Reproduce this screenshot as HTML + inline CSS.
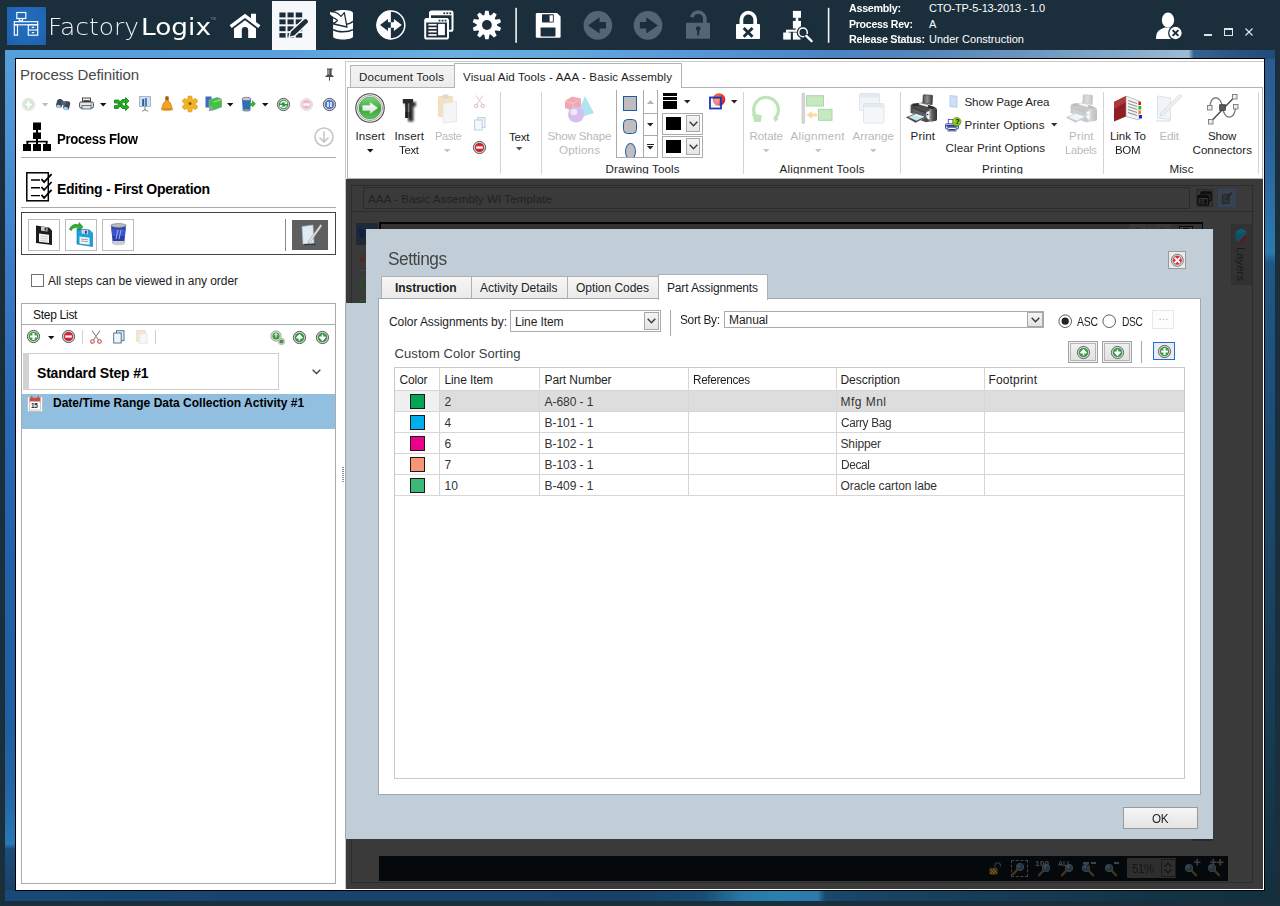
<!DOCTYPE html>
<html lang="en"><head><meta charset="utf-8"><title>FactoryLogix - Process Definition</title>
<style>
html,body{margin:0;padding:0}
body{width:1280px;height:906px;overflow:hidden;background:#1b2e3c;position:relative;font-family:"Liberation Sans",sans-serif;}
.a{position:absolute;box-sizing:border-box}
.t{position:absolute;white-space:nowrap;font-family:"Liberation Sans",sans-serif}
svg{overflow:visible}
</style></head><body>
<div class="a" style="left:5px;top:50px;width:1270px;height:851px;background:#1f4f85;"></div>
<div class="a" style="left:5px;top:50px;width:1270px;height:9px;background:linear-gradient(90deg,#569ddc 0%,#5aa0dd 22%,#6cb0e0 35%,#62a6dc 45%,#5a9ad8 52%,#5390d0 58%,#4b84c3 65%,#5486bb 72%,#6a94bf 80%,#86aac8 88%,#9cbad2 93%,#9cbad2 93.200%,#36628f 93.600%,#2d5788 96%,#224a78 100%);"></div>
<div class="a" style="left:5px;top:50px;width:11px;height:851px;background:linear-gradient(180deg,#579edc 0%,#4d93d6 10%,#3a7dc6 25%,#2b6ab4 42%,#2262aa 60%,#1f5fa2 80%,#2468a8 88%,#2a78b4 93.300%,#1c4c7c 93.900%,#193f62 100%);"></div>
<div class="a" style="left:5px;top:50px;width:8px;height:9px;background:#579edc;"></div>
<div class="a" style="left:1264px;top:59px;width:11px;height:842px;background:linear-gradient(180deg,#2a5a90 0%,#2a629a 10%,#2b72a8 19%,#2a7aae 23%,#1f5784 24.200%,#1d4e7a 40%,#19425f 65%,#143648 88%,#12303e 100%);"></div>
<div class="a" style="left:5px;top:890px;width:1270px;height:11px;background:linear-gradient(90deg,#1a4878 0%,#17446e 20%,#164268 50%,#194c74 55%,#2678a8 58%,#2b80b0 61%,#2a7aac 64%,#18486c 64.600%,#163e5a 75%,#133446 90%,#12303e 100%);"></div>
<div class="a" style="left:15px;top:58px;width:1250px;height:833px;background:#fff;border:1px solid #000;"></div>
<div class="a" style="left:7px;top:7px;width:39px;height:38px;background:radial-gradient(ellipse at 50% 45%,#226bbb 0%,#2168b8 60%,#1f5faa 100%);"></div>
<svg class="a" style="left:7px;top:7px;" width="39" height="38" viewBox="0 0 39 38"><g fill="none" stroke="#fff" stroke-width="1.150">
<rect x="9.800" y="5.500" width="9" height="6"></rect><path d="M12.300 11.500v2.300h3.200v-2.300"></path>
<rect x="7.300" y="14.700" width="23.400" height="3.100"></rect><rect x="7.300" y="17.800" width="3.200" height="10.400"></rect>
<rect x="21.300" y="17.800" width="9.400" height="10.400"></rect><path d="M21.300 23h9.400"></path>
<path d="M24.800 20.400h2.400M24.800 25.700h2.400" stroke-width="1.300"></path></g></svg>
<span class="t" style="left: 48px; top: 11.5px; font-size: 22.5px; line-height: 30px; color: rgb(238, 242, 245); font-family: &quot;DejaVu Sans&quot;, sans-serif; font-weight: 200; transform: scaleX(1.107); transform-origin: 0px 50%;">Factory</span>
<span class="t" style="left: 141px; top: 11.5px; font-size: 22.5px; line-height: 30px; color: rgb(255, 255, 255); font-family: &quot;DejaVu Sans&quot;, sans-serif; transform: scaleX(1.171); transform-origin: 0px 50%;">Logix</span>
<span class="t" style="left:210.5px;top:16.3px;font-size:3.6px;font-weight:400;color:#8295a3;line-height:6px;">TM</span>
<div class="a" style="left:272px;top:1px;width:44px;height:49px;background:#f7f8fb;"></div>
<svg class="a" style="left:0;top:0" width="1280" height="50" viewBox="0 0 1280 50">
<!-- home -->
<path d="M229.600 25.300 L245 13.700 L251 18.200 V13.800 H256 V22 L260.400 25.300 L258.300 28.100 L245 18.100 L231.700 28.100 Z" fill="#fff"></path>
<path d="M234 28.600 L245 20.300 L256 28.600 V38 H248.200 V30.200 a3.200 3.200 0 0 0 -6.400 0 V38 H234 Z" fill="#fff"></path>
<!-- grid + pencil -->
<g fill="#1b2e3c">
<rect x="279.400" y="12.500" width="6.200" height="4.900"></rect><rect x="287.500" y="12.500" width="6.200" height="4.900"></rect><rect x="295.700" y="12.500" width="6.500" height="4.900"></rect>
<rect x="279.400" y="19.400" width="6.200" height="4.900"></rect><rect x="287.500" y="19.400" width="6.200" height="4.900"></rect><rect x="295.700" y="19.400" width="6.500" height="4.900"></rect>
<rect x="279.400" y="26.300" width="6.200" height="4.900"></rect><rect x="287.500" y="26.300" width="6.200" height="4.900"></rect><rect x="295.700" y="26.300" width="6.500" height="4.900"></rect>
<rect x="279.400" y="33.100" width="6.200" height="4.500"></rect><rect x="287.500" y="33.100" width="6.200" height="4.500"></rect><rect x="295.700" y="33.100" width="6.500" height="4.500"></rect>
</g>
<path d="M289 37.400 L290.300 31.600 L303.800 18.900 a2.300 2.300 0 0 1 3.300 0 L308 19.900 a2.300 2.300 0 0 1 0 3.300 L294.800 36 Z" fill="#1b2e3c" stroke="#f7f8fb" stroke-width="1.400" stroke-linejoin="round"></path>
<!-- database + arrow -->
<path d="M333.100 13.200 C333.100 9,353 9,353 13.200 V36.600 C353 40.600,333.100 40.600,333.100 36.600 Z" fill="#fff"></path>
<path d="M333.100 22.600 C337 25.600,349 25.400,353 21.200 M333.100 29.600 C338 32.600,348 32.600,353 29.600" fill="none" stroke="#1b2e3c" stroke-width="1.500"></path>
<path d="M329.300 12.700 Q329 11.300 330.800 11.500 L335 12.200 Q338.500 13.200 341 16.400 L344.300 12.600 L347 27 L333.600 24 L337.400 20.500 Q335.500 18.300 333 17.600 L330.300 15.600 Q329.300 14.500 329.300 12.700 Z" fill="#fff" stroke="#1b2e3c" stroke-width="1.300" stroke-linejoin="round"></path>
<!-- compass -->
<circle cx="390.900" cy="25" r="13.900" fill="none" stroke="#fff" stroke-width="1.500"></circle>
<path d="M390.900 10.600 A14.400 14.400 0 0 0 390.900 39.400 Z" fill="#fff"></path>
<path d="M380 25 L388 19 V22.300 H391 V27.700 H388 V31 Z" fill="#1b2e3c"></path>
<path d="M401.800 25 L393.900 19 V22.300 H390.800 V27.700 H393.900 V31 Z" fill="#fff"></path>
<!-- windows -->
<rect x="430" y="11.400" width="22.500" height="19.400" rx="1.600" fill="#1b2e3c" stroke="#fff" stroke-width="2"></rect>
<rect x="430" y="11" width="22.500" height="4.300" fill="#fff"></rect>
<rect x="425.200" y="18.900" width="22.800" height="19.700" rx="1.600" fill="#1b2e3c" stroke="#fff" stroke-width="2"></rect>
<rect x="425.200" y="18.500" width="22.800" height="4" fill="#fff"></rect>
<g fill="#fff"><rect x="428.400" y="23.900" width="8.200" height="1.700"></rect><rect x="428.400" y="27.300" width="8.200" height="1.700"></rect><rect x="428.400" y="30.700" width="8.200" height="1.700"></rect><rect x="428.400" y="34.100" width="8.200" height="1.700"></rect><rect x="438.100" y="23.900" width="6.800" height="11.300"></rect></g>
<g fill="#1b2e3c"><rect x="443.400" y="12.400" width="1.800" height="1.700"></rect><rect x="446.400" y="12.400" width="1.800" height="1.700"></rect><rect x="449.400" y="12.400" width="1.800" height="1.700"></rect><rect x="438.600" y="19.700" width="1.800" height="1.700"></rect><rect x="441.600" y="19.700" width="1.800" height="1.700"></rect><rect x="444.600" y="19.700" width="1.800" height="1.700"></rect></g>
<!-- gear -->
<g transform="translate(486.900,25)" fill="#fff"><path d="M-2.700 -9 L-1.700 -14.300 L1.700 -14.300 L2.700 -9 Z" transform="rotate(0)"></path><path d="M-2.700 -9 L-1.700 -14.300 L1.700 -14.300 L2.700 -9 Z" transform="rotate(36)"></path><path d="M-2.700 -9 L-1.700 -14.300 L1.700 -14.300 L2.700 -9 Z" transform="rotate(72)"></path><path d="M-2.700 -9 L-1.700 -14.300 L1.700 -14.300 L2.700 -9 Z" transform="rotate(108)"></path><path d="M-2.700 -9 L-1.700 -14.300 L1.700 -14.300 L2.700 -9 Z" transform="rotate(144)"></path><path d="M-2.700 -9 L-1.700 -14.300 L1.700 -14.300 L2.700 -9 Z" transform="rotate(180)"></path><path d="M-2.700 -9 L-1.700 -14.300 L1.700 -14.300 L2.700 -9 Z" transform="rotate(216)"></path><path d="M-2.700 -9 L-1.700 -14.300 L1.700 -14.300 L2.700 -9 Z" transform="rotate(252)"></path><path d="M-2.700 -9 L-1.700 -14.300 L1.700 -14.300 L2.700 -9 Z" transform="rotate(288)"></path><path d="M-2.700 -9 L-1.700 -14.300 L1.700 -14.300 L2.700 -9 Z" transform="rotate(324)"></path><circle r="10.200"></circle></g><circle cx="486.900" cy="25" r="4.900" fill="#1b2e3c"></circle>
<!-- separators -->
<rect x="515.300" y="7.800" width="1.600" height="35" fill="#f2f4f6"></rect><rect x="827.800" y="7.800" width="1.600" height="35" fill="#f2f4f6"></rect>
<!-- save -->
<path d="M537 13 H557 L560.600 16.600 V36.600 Q560.600 37.800 559.400 37.800 H537 Q535.800 37.800 535.800 36.600 V14.200 Q535.800 13 537 13 Z" fill="#fff"></path>
<rect x="542" y="14.200" width="11.800" height="8.400" rx=".8" fill="#1b2e3c"></rect><rect x="549.600" y="15.300" width="3.300" height="6.400" fill="#fff"></rect>
<rect x="540.600" y="27.400" width="14.900" height="9.100" rx=".8" fill="#1b2e3c"></rect>
<!-- back / forward -->
<circle cx="597.900" cy="25.400" r="14.300" fill="#546673"></circle><path d="M588 25.400 L599.600 17.300 V22.100 H606 V28.600 H599.600 V33.500 Z" fill="#1b2e3c"></path>
<circle cx="648" cy="25.400" r="14.300" fill="#546673"></circle><path d="M657.900 25.400 L646.300 17.300 V22.100 H639.900 V28.600 H646.300 V33.500 Z" fill="#1b2e3c"></path>
<!-- unlock (dim) -->
<path d="M691.800 17.200 a6.600 6.600 0 0 1 13 1.500 V23" fill="none" stroke="#546673" stroke-width="3.700"></path>
<rect x="686" y="22.700" width="24" height="16" rx=".8" fill="#546673"></rect><circle cx="698.200" cy="28.500" r="2.300" fill="#1b2e3c"></circle><rect x="697.200" y="29" width="2" height="6.300" fill="#1b2e3c"></rect>
<!-- lock x -->
<path d="M741.400 24.500 V19.600 a6.900 6.900 0 0 1 13.800 0 V24.500" fill="none" stroke="#fff" stroke-width="3.700"></path>
<rect x="736" y="24" width="24" height="15" rx=".8" fill="#fff"></rect><path d="M743.700 28 l8.800 8.800 M752.500 28 l-8.800 8.800" stroke="#1b2e3c" stroke-width="2.900"></path>
<!-- flow search -->
<g fill="#fff"><rect x="792.900" y="10.900" width="8.100" height="6.900"></rect><rect x="795.700" y="17.500" width="2.600" height="3.700"></rect><rect x="792.900" y="20.900" width="8.100" height="7.500"></rect><rect x="795.700" y="28" width="2.600" height="3.700"></rect>
<rect x="786.200" y="29.700" width="11" height="2.100"></rect><rect x="786.200" y="30" width="2.100" height="3"></rect><rect x="783.200" y="32.500" width="7.600" height="7.100"></rect><rect x="792.900" y="32.500" width="7.600" height="7.100"></rect></g>
<circle cx="803" cy="32.400" r="5" fill="#1b2e3c" stroke="#1b2e3c" stroke-width="2.600"></circle><circle cx="803" cy="32.400" r="4.300" fill="#1b2e3c" stroke="#fff" stroke-width="1.500"></circle>
<path d="M806.300 35.900 L811.800 41.300" stroke="#1b2e3c" stroke-width="4.200" stroke-linecap="round"></path><path d="M806.300 35.900 L811.600 41.100" stroke="#fff" stroke-width="2.300" stroke-linecap="round"></path>
</svg>
<span class="t" style="left: 849px; top: -2px; font-size: 11px; font-weight: 700; color: rgb(255, 255, 255); line-height: 20px; letter-spacing: -0.31px; transform: scaleX(0.978); transform-origin: 0px 50%;">Assembly:</span>
<span class="t" style="left: 929px; top: -2px; font-size: 11px; font-weight: 400; color: rgb(255, 255, 255); line-height: 20px; letter-spacing: -0.17px;">CTO-TP-5-13-2013 - 1.0</span>
<span class="t" style="left: 849px; top: 14px; font-size: 11px; font-weight: 700; color: rgb(255, 255, 255); line-height: 20px; letter-spacing: -0.31px; transform: scaleX(0.965); transform-origin: 0px 50%;">Process Rev:</span>
<span class="t" style="left:929px;top:14.0px;font-size:11px;font-weight:400;color:#fff;line-height:20px;">A</span>
<span class="t" style="left: 849px; top: 29px; font-size: 11px; font-weight: 700; color: rgb(255, 255, 255); line-height: 20px; letter-spacing: -0.31px; transform: scaleX(0.98); transform-origin: 0px 50%;">Release Status:</span>
<span class="t" style="left: 929px; top: 29px; font-size: 11px; font-weight: 400; color: rgb(255, 255, 255); line-height: 20px; letter-spacing: 0.01px;">Under Construction</span>
<svg class="a" style="left:1156px;top:12px;" width="27" height="28" viewBox="0 0 27 28"><ellipse cx="12" cy="8" rx="6.2" ry="7.5" fill="#fff"></ellipse><path d="M0 27 C0 18,5 17,9 15.5 h6 C19 17,24 18,24 27Z" fill="#fff"></path>
<circle cx="19.5" cy="21" r="6.8" fill="#fff" stroke="#1b2e3c" stroke-width="1.3"></circle><path d="M16.6 18.1 l5.8 5.8 M22.4 18.1 l-5.8 5.8" stroke="#1b2e3c" stroke-width="2"></path></svg>
<div class="a" style="left:1204px;top:34px;width:8px;height:2px;background:#dfe5ea;"></div>
<div class="a" style="left:1224px;top:28px;width:9px;height:8px;border:1px solid #dfe5ea;border-top-width:2px;"></div>
<svg class="a" style="left:1245px;top:28px;" width="8" height="8" viewBox="0 0 8 8"><path d="M0.5 0.5 l7 7 M7.5 0.5 l-7 7" stroke="#dfe5ea" stroke-width="1.2"></path></svg>
<span class="t" style="left: 20px; top: 64.5px; font-size: 15px; font-weight: 400; color: rgb(72, 72, 72); line-height: 20px; letter-spacing: -0.11px;">Process Definition</span>
<svg class="a" style="left:325px;top:68px;" width="9" height="13" viewBox="0 0 9 13"><path d="M2 0.5h5.5v1H6.6v5.2l2 1.6v.8H0.4v-.8l2-1.6V1.5H2z" fill="#4a4a4a"></path><rect x="3" y="1.5" width="1.6" height="5" fill="#999"></rect><path d="M4.5 9v3.6" stroke="#4a4a4a" stroke-width="1"></path></svg>
<svg class="a" style="left:20.5px;top:96.5px;opacity:0.55" width="15.0" height="15.0" viewBox="-7.5 -7.5 15.0 15.0"><circle r="6.1" fill="#e4e4e4" stroke="#bbb" stroke-width="0.9"></circle><circle r="4.6" fill="#9dd49d" stroke="#bbb" stroke-opacity=".55" stroke-width=".5"></circle><path d="M-3.500 0h7M0-3.500v7" stroke="#fff" stroke-width="2.200"></path></svg>
<svg class="a" style="left:41.8px;top:102.7px;" width="6.4" height="3.5" viewBox="0 0 6.4 3.5"><path d="M0 0h6.400L3.200 3.500z" fill="#bbb"></path></svg>
<svg class="a" style="left:56px;top:97px;" width="15" height="13" viewBox="0 0 15 13"><g transform="rotate(16 7 7)"><rect x="0.5" y="3" width="6" height="9" rx="2.6" fill="#3c4854"></rect><rect x="8" y="3" width="6" height="9" rx="2.6" fill="#3c4854"></rect><rect x="5" y="4" width="4.5" height="4" fill="#556270"></rect>
<ellipse cx="3.5" cy="10.6" rx="2.3" ry="1.6" fill="#9fd0f0"></ellipse><ellipse cx="11" cy="10.6" rx="2.3" ry="1.6" fill="#9fd0f0"></ellipse></g></svg>
<svg class="a" style="left:79px;top:97px;" width="15" height="13" viewBox="0 0 15 13"><rect x="3.5" y="1" width="8" height="5" fill="#f4f4f4" stroke="#333" stroke-width=".9"></rect><rect x="4.300" y="3.200" width="6.400" height="2.300" fill="#3a3a3a"></rect><rect x="0.6" y="5" width="13.8" height="6" rx="1.3" fill="#e9e9ec" stroke="#333" stroke-width=".9"></rect><rect x="3" y="8.4" width="9" height="3.6" fill="#cfe9f5" stroke="#555" stroke-width=".8"></rect><rect x="11.6" y="6.5" width="1.3" height="1" fill="#36f"></rect></svg>
<svg class="a" style="left:99.8px;top:102.7px;" width="6.4" height="3.5" viewBox="0 0 6.4 3.5"><path d="M0 0h6.400L3.200 3.500z" fill="#111"></path></svg>
<svg class="a" style="left:114px;top:97px;" width="15" height="14" viewBox="0 0 15 14"><g fill="#22b022" stroke="#0d7a0d" stroke-width=".8"><path d="M0.5 3h4l5 6h2V7l3.5 3.3L11.5 13.5v-2H8.3L3.5 6h-3z"></path><path d="M0.5 11.5h3.6l5-6.2h2.4v2L15 4 11.500.6v2H8L3.3 8.5H0.5z"></path></g></svg>
<svg class="a" style="left:139px;top:96px;" width="12" height="16" viewBox="0 0 12 16"><rect x="0.5" y="0.5" width="11" height="10" fill="#cfe0f2" stroke="#9ab" stroke-width=".8"></rect><rect x="3.2" y="3" width="2" height="7" fill="#2c5c9c"></rect><rect x="6" y="2" width="2" height="8" fill="#557fb8"></rect><path d="M6 10.500v4M3 15.5l3-2 3 2" stroke="#777" stroke-width=".9" fill="none"></path></svg>
<svg class="a" style="left:161px;top:96px;" width="12" height="15" viewBox="0 0 12 15"><path d="M4.7 0.8h2.6v4.5C10 6.5,10.3 10,11.3 12.5v1.3H0.7v-1.3C1.7 10,2 6.500,4.700 5.300z" fill="#f2a422" stroke="#b36b0a" stroke-width=".7"></path><rect x="4.700" y="0.600" width="2.600" height="3.500" fill="#a25b12"></rect><ellipse cx="6" cy="13.300" rx="5.200" ry="1.200" fill="#d98914"></ellipse></svg>
<svg class="a" style="left:182px;top:96px;" width="16" height="16" viewBox="0 0 16 16"><g transform="translate(8,8)" fill="#f0b323" stroke="#c98a10" stroke-width=".5"><rect x="-2.2" y="-8" width="4.4" height="5" rx="1.4" transform="rotate(0)"></rect><rect x="-2.2" y="-8" width="4.4" height="5" rx="1.4" transform="rotate(60)"></rect><rect x="-2.2" y="-8" width="4.4" height="5" rx="1.4" transform="rotate(120)"></rect><rect x="-2.2" y="-8" width="4.4" height="5" rx="1.4" transform="rotate(180)"></rect><rect x="-2.2" y="-8" width="4.4" height="5" rx="1.4" transform="rotate(240)"></rect><rect x="-2.2" y="-8" width="4.4" height="5" rx="1.4" transform="rotate(300)"></rect><circle r="5.6" stroke="none"></circle></g><circle cx="8" cy="7.500" r="1.600" fill="#7a5a10"></circle></svg>
<svg class="a" style="left:205px;top:96px;" width="17" height="16" viewBox="0 0 17 16"><rect x="0.5" y="0.5" width="6" height="11" fill="#3a6cc0"></rect><path d="M4 4l8-2.500 4.500 1.500v8l-8 3L4 12z" fill="#3fc43f" stroke="#8a9aa8" stroke-width=".8"></path><path d="M8.500 6l8-2.500" stroke="#d7f5d7" stroke-width=".7"></path><rect x="4" y="10" width="3.500" height="5" fill="#8aa"></rect></svg>
<svg class="a" style="left:226.8px;top:102.7px;" width="6.4" height="3.5" viewBox="0 0 6.4 3.5"><path d="M0 0h6.400L3.200 3.500z" fill="#111"></path></svg>
<svg class="a" style="left:241px;top:96px;" width="15" height="16" viewBox="0 0 15 16"><path d="M1 3h9l-.7 11.500H1.700z" fill="#2a6fb8"></path><ellipse cx="5.500" cy="3" rx="4.600" ry="1.700" fill="#c8ccd0" stroke="#667" stroke-width=".7"></ellipse><ellipse cx="5.500" cy="14.200" rx="3.900" ry="1.300" fill="#8a949c"></ellipse><path d="M6.500 10.500l5-4V4.700l3 3.100-3 3.200V9.200z" fill="#2eb82e" stroke="#128a12" stroke-width=".5"></path></svg>
<svg class="a" style="left:261.8px;top:102.7px;" width="6.4" height="3.5" viewBox="0 0 6.4 3.5"><path d="M0 0h6.400L3.200 3.500z" fill="#111"></path></svg>
<svg class="a" style="left:275.5px;top:96.5px;opacity:1" width="15.0" height="15.0" viewBox="-7.5 -7.5 15.0 15.0"><circle r="6.1" fill="#e4e4e4" stroke="#444" stroke-width="0.9"></circle><circle r="4.6" fill="#2a9a3a" stroke="#444" stroke-opacity=".55" stroke-width=".5"></circle><path d="M-2.900-.9A3 3 0 0 1 2.300-1.900M2.900.900A3 3 0 0 1-2.300 1.900" stroke="#fff" stroke-width="1.300" fill="none"></path><path d="M3.600-3.300v2.700h-2.700zM-3.600 3.300v-2.700h2.700z" fill="#fff"></path></svg>
<svg class="a" style="left:298.5px;top:96.5px;opacity:0.7" width="15.0" height="15.0" viewBox="-7.5 -7.5 15.0 15.0"><circle r="6.1" fill="#e4e4e4" stroke="#ccc" stroke-width="0.9"></circle><circle r="4.6" fill="#f29ab0" stroke="#ccc" stroke-opacity=".55" stroke-width=".5"></circle><path d="M-3.300 0h6.600" stroke="#fff" stroke-width="2.300"></path></svg>
<svg class="a" style="left:321.5px;top:96.5px;opacity:1" width="15.0" height="15.0" viewBox="-7.5 -7.5 15.0 15.0"><circle r="6.1" fill="#e4e4e4" stroke="#444" stroke-width="0.9"></circle><circle r="4.6" fill="#4a78e0" stroke="#444" stroke-opacity=".55" stroke-width=".5"></circle><path d="M-1.500-2.600v5.200M1.500-2.600v5.200" stroke="#fff" stroke-width="1.500"></path></svg>
<svg class="a" style="left:23px;top:122px;" width="28" height="29" viewBox="0 0 28 29"><g fill="#000"><rect x="10" y="0.500" width="8" height="7.500"></rect><rect x="10" y="10.500" width="8" height="6.500"></rect><rect x="13" y="7" width="2" height="5"></rect><rect x="13" y="16" width="2" height="7"></rect><rect x="3.500" y="18.800" width="21" height="1.600"></rect><rect x="3.500" y="19" width="1.800" height="4"></rect><rect x="22.700" y="19" width="1.800" height="4"></rect>
<rect x="0" y="22" width="8" height="7"></rect><rect x="10" y="22" width="8" height="7"></rect><rect x="20" y="22" width="8" height="7"></rect></g></svg>
<span class="t" style="left: 57px; top: 129.3px; font-size: 14px; font-weight: 700; color: rgb(0, 0, 0); line-height: 20px; letter-spacing: -0.39px; transform: scaleX(0.942); transform-origin: 0px 50%;">Process Flow</span>
<svg class="a" style="left:314px;top:127px;" width="20" height="20" viewBox="0 0 20 20"><circle cx="10" cy="10" r="9" fill="none" stroke="#c6c6c6" stroke-width="1.600"></circle><path d="M10 4.500v10M5.500 10.500l4.500 4.500 4.500-4.500" fill="none" stroke="#c6c6c6" stroke-width="1.600"></path></svg>
<div class="a" style="left:21px;top:157px;width:315px;height:1px;background:#ababab;"></div>
<svg class="a" style="left:26px;top:171px;" width="27" height="31" viewBox="0 0 27 31"><rect x="0.800" y="1.800" width="21.500" height="28" fill="#fff" stroke="#000" stroke-width="1.500"></rect>
<path d="M5 9h9M5 16.800h9M5 24.600h9" stroke="#000" stroke-width="1.400"></path>
<path d="M15.500 8.200l2.600 3 7.500-8M15.500 16l2.600 3 7.500-8M15.500 23.800l2.600 3 7.500-8" stroke="#000" stroke-width="1.800" fill="none"></path></svg>
<span class="t" style="left: 57px; top: 179.3px; font-size: 14px; font-weight: 700; color: rgb(0, 0, 0); line-height: 20px; letter-spacing: -0.3px;">Editing - First Operation</span>
<div class="a" style="left:21px;top:207px;width:315px;height:1px;background:#ababab;"></div>
<div class="a" style="left:21px;top:212px;width:315px;height:43px;border:1px solid #444;background:#fff;"></div>
<div class="a" style="left:28px;top:219px;width:32px;height:32px;border:1px solid #bcbcbc;background:#fff;"></div>
<div class="a" style="left:65px;top:219px;width:32px;height:32px;border:1px solid #bcbcbc;background:#fff;"></div>
<div class="a" style="left:102px;top:219px;width:32px;height:32px;border:1px solid #bcbcbc;background:#fff;"></div>
<svg class="a" style="left:35px;top:224px;" width="18" height="22" viewBox="0 0 18 22"><path d="M1 1.500L14 3.500l3 3V21L1 19z" fill="#1c1c1c"></path><path d="M4 9.500l10 1.200V19l-10-1.200z" fill="#f3f3f3"></path><path d="M6 2.500l6.500.9v4.200L6 6.800z" fill="#c8c8c8"></path><rect x="9.600" y="3.600" width="1.800" height="3" fill="#333"></rect><path d="M5.500 12l7 .8M5.500 14.200l7 .8M5.500 16.400l7 .8" stroke="#bbb" stroke-width=".7"></path></svg>
<svg class="a" style="left:69px;top:222px;" width="25" height="25" viewBox="0 0 25 25"><path d="M8 6.500L20.500 8l3 3v13.500L8 22z" fill="#1ba3dd" stroke="#0c6ea0" stroke-width=".6"></path><path d="M10.500 14.500l10 1.200v7l-10-1.200z" fill="#f3f7fa"></path><path d="M12.500 7.500l6.500.8v4l-6.500-.8z" fill="#d0d4d8"></path><rect x="16" y="8.800" width="1.800" height="2.800" fill="#246"></rect><path d="M12 17l7 .8M12 19l7 .8" stroke="#777" stroke-width=".7"></path>
<path d="M0.500 7.500C2 2.500,7 1.500,10 3V0.500l4 4.200-4 3.800V6C7 5,3.500 5.500,2.500 8.500z" fill="#2fae2f" stroke="#157a15" stroke-width=".5"></path></svg>
<svg class="a" style="left:110px;top:223px;" width="17" height="23" viewBox="0 0 17 23"><path d="M1 2.500h15l-1.800 18.500H2.800z" fill="#2a3fa8"></path><path d="M1.500 6h14l-.6 7H2.200z" fill="#3d55c8"></path><path d="M8 7l-2 9M11 7l-2 9" stroke="#9fb0f0" stroke-width="1"></path><ellipse cx="8.500" cy="2.500" rx="7.700" ry="1.900" fill="#b9bec4" stroke="#7d858c" stroke-width=".8"></ellipse><path d="M2.600 18h11.800l-.3 3.200c-2 1.500-9 1.500-11.200 0z" fill="#c9ced2"></path></svg>
<div class="a" style="left:285px;top:219px;width:1px;height:32px;background:#8a8a8a;"></div>
<div class="a" style="left:292px;top:220px;width:36px;height:30px;background:#5f5f5f;"></div>
<svg class="a" style="left:299px;top:223px;" width="24" height="24" viewBox="0 0 24 24"><path d="M3 3.500l11-1.500 1 18-11 1.500z" fill="#dfeaf3" stroke="#9fb3c4" stroke-width=".6"></path><path d="M21.500 1.500l1.500 1.200L11.500 19l-2.500 1.800.8-3z" fill="#e9e9e9" stroke="#888" stroke-width=".5"></path><path d="M4.500 21.500h12" stroke="#3a3a3a" stroke-width="1.200"></path></svg>
<div class="a" style="left:31px;top:274px;width:13px;height:13px;border:1px solid #707070;background:#fff;"></div>
<span class="t" style="left: 48px; top: 271px; font-size: 12px; font-weight: 400; color: rgb(34, 34, 34); line-height: 20px; letter-spacing: -0.06px;">All steps can be viewed in any order</span>
<div class="a" style="left:21px;top:303px;width:315px;height:581px;border:1px solid #ababab;background:#fff;"></div>
<span class="t" style="left: 33px; top: 304.5px; font-size: 12px; font-weight: 400; color: rgb(17, 17, 17); line-height: 20px; letter-spacing: -0.28px;">Step List</span>
<div class="a" style="left:22px;top:324px;width:313px;height:1px;background:#ababab;"></div>
<svg class="a" style="left:26.200000000000003px;top:329.2px;opacity:1" width="15.0" height="15.0" viewBox="-7.5 -7.5 15.0 15.0"><circle r="6.1" fill="#e4e4e4" stroke="#444" stroke-width="0.9"></circle><circle r="4.6" fill="#35a535" stroke="#444" stroke-opacity=".55" stroke-width=".5"></circle><path d="M-3.500 0h7M0-3.500v7" stroke="#fff" stroke-width="2.200"></path></svg>
<svg class="a" style="left:47.8px;top:335.7px;" width="6.4" height="3.5" viewBox="0 0 6.4 3.5"><path d="M0 0h6.400L3.200 3.500z" fill="#111"></path></svg>
<svg class="a" style="left:61.2px;top:329.2px;opacity:1" width="15.0" height="15.0" viewBox="-7.5 -7.5 15.0 15.0"><circle r="6.1" fill="#e4e4e4" stroke="#444" stroke-width="0.9"></circle><circle r="4.6" fill="#d8202f" stroke="#444" stroke-opacity=".55" stroke-width=".5"></circle><path d="M-3.300 0h6.600" stroke="#fff" stroke-width="2.300"></path></svg>
<div class="a" style="left:82px;top:330px;width:1px;height:14px;background:#d0d0d0;"></div>
<div class="a" style="left:155px;top:330px;width:1px;height:14px;background:#d0d0d0;"></div>
<svg class="a" style="left:90px;top:330px;" width="12" height="14" viewBox="0 0 12 14"><path d="M2 0.500L8.500 10M10 0.500L3.500 10" stroke="#8a8f94" stroke-width="1.100"></path><circle cx="2.500" cy="11.500" r="1.800" fill="none" stroke="#c0504d" stroke-width="1.100"></circle><circle cx="9.500" cy="11.500" r="1.800" fill="none" stroke="#c0504d" stroke-width="1.100"></circle></svg>
<svg class="a" style="left:113px;top:330px;" width="12" height="14" viewBox="0 0 12 14"><rect x="3.500" y="0.700" width="7.500" height="10" fill="#dfe9f3" stroke="#4a6a8a" stroke-width=".9"></rect><rect x="0.700" y="3" width="7.500" height="10" fill="#eef4fa" stroke="#4a6a8a" stroke-width=".9"></rect></svg>
<svg class="a" style="left:136px;top:329px;opacity:.8" width="12" height="15" viewBox="0 0 12 15"><rect x="0.700" y="1.500" width="8.500" height="11" fill="#f3e3c3" stroke="#e3d3b3" stroke-width=".8"></rect><rect x="3.500" y="4.500" width="7.500" height="10" fill="#f6f6f6" stroke="#e0e0e0" stroke-width=".8"></rect></svg>
<svg class="a" style="left:270px;top:330px;" width="15" height="15" viewBox="0 0 15 15"><circle cx="6" cy="6" r="5.200" fill="#dcdcdc" stroke="#999" stroke-width=".8"></circle><circle cx="6" cy="6" r="3.600" fill="#3a9a3a"></circle><path d="M6 3.500v4M4.300 5.300L6 3.500l1.700 1.800" stroke="#fff" stroke-width="1" fill="none"></path><circle cx="11.500" cy="11.500" r="3.200" fill="#dcdcdc" stroke="#999" stroke-width=".6"></circle><circle cx="11.500" cy="11.500" r="2.100" fill="#3a9a3a"></circle></svg>
<svg class="a" style="left:292.0px;top:329.5px;opacity:1" width="15.0" height="15.0" viewBox="-7.5 -7.5 15.0 15.0"><circle r="6.1" fill="#e4e4e4" stroke="#444" stroke-width="0.9"></circle><circle r="4.6" fill="#2f9f3f" stroke="#444" stroke-opacity=".55" stroke-width=".5"></circle><path d="M0 3V-1M-2.600 .2L0-2.600l2.600 2.800z" stroke="#fff" stroke-width="1.500" fill="#fff" stroke-linejoin="round"></path></svg>
<svg class="a" style="left:315.0px;top:329.5px;opacity:1" width="15.0" height="15.0" viewBox="-7.5 -7.5 15.0 15.0"><circle r="6.1" fill="#e4e4e4" stroke="#444" stroke-width="0.9"></circle><circle r="4.6" fill="#2f9f3f" stroke="#444" stroke-opacity=".55" stroke-width=".5"></circle><path d="M0-3V1M-2.600-.2L0 2.600l2.600-2.800z" stroke="#fff" stroke-width="1.500" fill="#fff" stroke-linejoin="round"></path></svg>
<div class="a" style="left:23px;top:353px;width:256px;height:37px;border:1px solid #cfcfcf;border-left:6px solid #d2d2d2;background:#fff;"></div>
<span class="t" style="left: 37px; top: 363.3px; font-size: 14px; font-weight: 700; color: rgb(0, 0, 0); line-height: 20px; letter-spacing: -0.19px;">Standard Step #1</span>
<svg class="a" style="left:312px;top:369px;" width="9" height="6" viewBox="0 0 9 6"><path d="M0.700 0.700L4.500 4.500 8.300 0.700" fill="none" stroke="#444" stroke-width="1.400"></path></svg>
<div class="a" style="left:22px;top:394px;width:313px;height:34.5px;background:#92bfe0;"></div>
<svg class="a" style="left:27px;top:396px;" width="16" height="16" viewBox="0 0 16 16"><rect x="0.500" y="1" width="15" height="14.500" fill="#fafafa" stroke="#bbb" stroke-width=".8"></rect><rect x="2.500" y="1.500" width="11" height="4" fill="#d9433f"></rect><rect x="2.500" y="5.500" width="11" height="8.500" fill="#fff" stroke="#999" stroke-width=".5"></rect><rect x="4" y="0" width="1.500" height="3" fill="#777"></rect><rect x="10.500" y="0" width="1.500" height="3" fill="#777"></rect></svg>
<span class="t" style="left:29.5px;top:395.7px;font-size:6.5px;font-weight:700;color:#222;line-height:20px;letter-spacing:-.3px;left:31px">15</span>
<span class="t" style="left: 53px; top: 392.7px; font-size: 12px; font-weight: 700; color: rgb(0, 0, 0); line-height: 20px; letter-spacing: 0.01px;">Date/Time Range Data Collection Activity #1</span>
<div class="a" style="left:342px;top:467px;width:2px;height:1px;background:#8c8c8c;"></div>
<div class="a" style="left:342px;top:469px;width:2px;height:1px;background:#8c8c8c;"></div>
<div class="a" style="left:342px;top:471px;width:2px;height:1px;background:#8c8c8c;"></div>
<div class="a" style="left:342px;top:473px;width:2px;height:1px;background:#8c8c8c;"></div>
<div class="a" style="left:342px;top:475px;width:2px;height:1px;background:#8c8c8c;"></div>
<div class="a" style="left:342px;top:477px;width:2px;height:1px;background:#8c8c8c;"></div>
<div class="a" style="left:342px;top:479px;width:2px;height:1px;background:#8c8c8c;"></div>
<div class="a" style="left:342px;top:481px;width:2px;height:1px;background:#8c8c8c;"></div>
<div class="a" style="left:345px;top:61px;width:919px;height:1px;background:#c9c9c9;"></div>
<div class="a" style="left:345px;top:61px;width:1px;height:828px;background:#c9c9c9;"></div>
<div class="a" style="left:347px;top:87px;width:916px;height:92px;border:1px solid #b4b4b4;background:#fff;"></div>
<div class="a" style="left:350px;top:65px;width:106px;height:22px;border:1px solid #b4b4b4;border-bottom:none;background:linear-gradient(#f3f3f3,#ececec);"></div>
<div class="a" style="left:454px;top:63px;width:228px;height:25px;border:1px solid #b4b4b4;border-bottom:none;background:#fff;"></div>
<span class="t" style="left: 359px; top: 67px; font-size: 11.6px; font-weight: 400; color: rgb(30, 30, 30); line-height: 20px; letter-spacing: 0.16px;">Document Tools</span>
<span class="t" style="left: 463px; top: 66.5px; font-size: 11.6px; font-weight: 400; color: rgb(30, 30, 30); line-height: 20px; letter-spacing: 0.12px;">Visual Aid Tools - AAA - Basic Assembly</span>
<div class="a" style="left:500px;top:92px;width:1px;height:82px;background:#d4d4d4;"></div>
<div class="a" style="left:541px;top:92px;width:1px;height:82px;background:#d4d4d4;"></div>
<div class="a" style="left:743px;top:92px;width:1px;height:82px;background:#d4d4d4;"></div>
<div class="a" style="left:900px;top:92px;width:1px;height:82px;background:#d4d4d4;"></div>
<div class="a" style="left:1103px;top:92px;width:1px;height:82px;background:#d4d4d4;"></div>
<div class="a" style="left:1258px;top:92px;width:1px;height:82px;background:#d4d4d4;"></div>
<span class="t" style="left: 605.5px; top: 158.7px; font-size: 11.6px; font-weight: 400; color: rgb(30, 30, 30); line-height: 20px; letter-spacing: 0.12px;">Drawing Tools</span>
<span class="t" style="left: 779.5px; top: 158.7px; font-size: 11.6px; font-weight: 400; color: rgb(30, 30, 30); line-height: 20px; letter-spacing: 0.24px;">Alignment Tools</span>
<span class="t" style="left: 982px; top: 158.7px; font-size: 11.6px; font-weight: 400; color: rgb(30, 30, 30); line-height: 20px; letter-spacing: 0.24px;">Printing</span>
<span class="t" style="left: 1169.5px; top: 158.7px; font-size: 11.6px; font-weight: 400; color: rgb(30, 30, 30); line-height: 20px; letter-spacing: 0.06px;">Misc</span>
<svg class="a" style="left:354.7px;top:93.4px;" width="30" height="30" viewBox="0 0 30 30"><defs><linearGradient id="gi" x1="0" y1="0" x2="0" y2="1"><stop offset="0" stop-color="#7fd27c"></stop><stop offset=".48" stop-color="#43b043"></stop><stop offset=".52" stop-color="#35a535"></stop><stop offset="1" stop-color="#5cc45a"></stop></linearGradient>
<linearGradient id="ga" x1="0" y1="0" x2="0" y2="1"><stop offset="0" stop-color="#fff"></stop><stop offset="1" stop-color="#dcdcdc"></stop></linearGradient></defs>
<circle cx="15" cy="15" r="14.200" fill="#fdfdfd" stroke="#474747" stroke-width="1.100"></circle>
<circle cx="15" cy="15" r="12.500" fill="none" stroke="#8c8c8c" stroke-width=".8"></circle><circle cx="15" cy="15" r="11" fill="url(#gi)" stroke="#4f7f4f" stroke-width=".5"></circle>
<path d="M7.700 12.600h7.400V9.600l7.600 5.400-7.600 5.400v-3h-7.400z" fill="url(#ga)" stroke="#e9f3e9" stroke-width=".4"></path></svg>
<span class="t" style="left: 355.5px; top: 126px; font-size: 11.6px; font-weight: 400; color: rgb(30, 30, 30); line-height: 20px; letter-spacing: 0.06px;">Insert</span>
<svg class="a" style="left:366.8px;top:148.7px;" width="6.4" height="3.5" viewBox="0 0 6.4 3.5"><path d="M0 0h6.400L3.200 3.500z" fill="#111"></path></svg>
<svg class="a" style="left:399px;top:97px;" width="22" height="24" viewBox="0 0 22 24"><defs><filter id="sh" x="-50%" y="-50%" width="200%" height="200%"><feGaussianBlur stdDeviation="1.300"></feGaussianBlur></filter></defs>
<path d="M6.500 5h10.500v4.500h-2.500V24.500H9V9.500H6.500z" fill="#000" opacity=".8" filter="url(#sh)"></path>
<path d="M3.800 2h10.300v4.400h-2.500V21H6.200V6.400H3.800z" fill="#2a2a2a"></path><path d="M8.800 6.400h1.600V21H8.800z" fill="#7a7a7a"></path><path d="M6.200 15h5.400v6H6.200z" fill="#000" opacity=".35"></path></svg>
<span class="t" style="left: 394.5px; top: 126px; font-size: 11.6px; font-weight: 400; color: rgb(30, 30, 30); line-height: 20px; letter-spacing: 0.1px;">Insert</span>
<span class="t" style="left: 399px; top: 140px; font-size: 11.6px; font-weight: 400; color: rgb(30, 30, 30); line-height: 20px; letter-spacing: -0.32px; transform: scaleX(0.985); transform-origin: 0px 50%;">Text</span>
<svg class="a" style="left:438px;top:94px;" width="20" height="30" viewBox="0 0 20 30"><rect x="0.500" y="2.500" width="14" height="20" rx="1" fill="#f3e2c0" stroke="#ead5ac" stroke-width=".8"></rect><rect x="4.500" y="0.500" width="6" height="4" rx="1" fill="#d8d8d8"></rect>
<path d="M5 9.500l13.500-2v20L5 29z" fill="#f4f5f6" stroke="#e1e3e6" stroke-width=".8"></path></svg>
<span class="t" style="left: 434.5px; top: 126px; font-size: 11.6px; font-weight: 400; color: rgb(185, 185, 185); line-height: 20px; letter-spacing: -0.32px; transform: scaleX(0.952); transform-origin: 0px 50%;">Paste</span>
<svg class="a" style="left:444.3px;top:148.7px;" width="6.4" height="3.5" viewBox="0 0 6.4 3.5"><path d="M0 0h6.400L3.200 3.500z" fill="#c4c4c4"></path></svg>
<svg class="a" style="left:474px;top:94.5px;" width="11" height="14" viewBox="0 0 11 14"><path d="M2 0.500L8 9M9 0.500L3 9" stroke="#cfcfcf" stroke-width="1"></path><circle cx="2.300" cy="11" r="1.700" fill="none" stroke="#e6b3b3" stroke-width="1"></circle><circle cx="8.700" cy="11" r="1.700" fill="none" stroke="#e6b3b3" stroke-width="1"></circle></svg>
<svg class="a" style="left:474px;top:117px;" width="12" height="14" viewBox="0 0 12 14"><rect x="3.500" y="0.600" width="7.500" height="10" fill="#eef3f9" stroke="#bccbe0" stroke-width=".9"></rect><rect x="0.600" y="3" width="7.500" height="10" fill="#f4f8fc" stroke="#bccbe0" stroke-width=".9"></rect></svg>
<svg class="a" style="left:471.5px;top:139.7px;opacity:1" width="15.0" height="15.0" viewBox="-7.5 -7.5 15.0 15.0"><circle r="6.1" fill="#e4e4e4" stroke="#444" stroke-width="0.9"></circle><circle r="4.6" fill="#d8202f" stroke="#444" stroke-opacity=".55" stroke-width=".5"></circle><path d="M-3.300 0h6.600" stroke="#fff" stroke-width="2.300"></path></svg>
<span class="t" style="left: 509px; top: 127px; font-size: 11.6px; font-weight: 400; color: rgb(30, 30, 30); line-height: 20px; letter-spacing: -0.26px;">Text</span>
<svg class="a" style="left:515.8px;top:147.2px;" width="6.4" height="3.5" viewBox="0 0 6.4 3.5"><path d="M0 0h6.400L3.200 3.500z" fill="#555"></path></svg>
<svg class="a" style="left:564px;top:95px;" width="31" height="28" viewBox="0 0 31 28"><g opacity=".55"><path d="M1 6l7-4.500 9 2v9l-8 3.500-8-3z" fill="#e8607a"></path><path d="M1 6l8 2.500 8-5M9 8.500V16" stroke="#f5a0b0" stroke-width=".8" fill="none"></path>
<path d="M21 1l9 17-11 3.500-5-4z" fill="#6fd0e8"></path><circle cx="12" cy="19.500" r="8" fill="#b58ae0"></circle><circle cx="10" cy="17" r="3.300" fill="#e6d8f6"></circle></g></svg>
<span class="t" style="left: 547.5px; top: 126px; font-size: 11.6px; font-weight: 400; color: rgb(185, 185, 185); line-height: 20px; letter-spacing: -0.19px;">Show Shape</span>
<span class="t" style="left: 559px; top: 140px; font-size: 11.6px; font-weight: 400; color: rgb(185, 185, 185); line-height: 20px; letter-spacing: 0.17px;">Options</span>
<div class="a" style="left:616px;top:90px;width:42px;height:68px;border:1px solid #ababab;border-top:none;background:#fff;overflow:hidden;"><div class="a" style="left:26px;top:0;width:1px;height:68px;background:#ababab"></div><div class="a" style="left:26px;top:23px;width:15px;height:1px;background:#ababab"></div><div class="a" style="left:26px;top:45px;width:15px;height:1px;background:#ababab"></div><div class="a" style="left:5.500px;top:6px;width:14.500px;height:14.500px;background:#c1bdbd;border:1.800px solid #1a5cb0;"></div><div class="a" style="left:5.500px;top:29px;width:14.500px;height:14.500px;background:#c1bdbd;border:1.800px solid #1a5cb0;border-radius:4.500px"></div><div class="a" style="left:7.500px;top:52.500px;width:11px;height:17px;background:#c1bdbd;border:1.300px solid #1f62b5;border-radius:50%"></div></div>
<svg class="a" style="left:646.5px;top:100px;" width="7" height="4" viewBox="0 0 7 4"><path d="M0 4h7L3.500 0z" fill="#b5b5b5"></path></svg>
<svg class="a" style="left:646.8px;top:123.2px;" width="6.4" height="3.5" viewBox="0 0 6.4 3.5"><path d="M0 0h6.400L3.200 3.500z" fill="#222"></path></svg>
<div class="a" style="left:646.5px;top:143.5px;width:7px;height:1.3px;background:#222;"></div>
<svg class="a" style="left:646.8px;top:146.2px;" width="6.4" height="3.5" viewBox="0 0 6.4 3.5"><path d="M0 0h6.400L3.200 3.500z" fill="#222"></path></svg>
<div class="a" style="left:663px;top:93.3px;width:13.5px;height:2.7px;background:#000;"></div>
<div class="a" style="left:663px;top:97.3px;width:13.5px;height:3.0px;background:#000;"></div>
<div class="a" style="left:663px;top:101.3px;width:13.5px;height:3.3000000000000003px;background:#000;"></div>
<div class="a" style="left:663px;top:105.3px;width:13.5px;height:3.7px;background:#000;"></div>
<svg class="a" style="left:683.8px;top:99.7px;" width="6.4" height="3.5" viewBox="0 0 6.4 3.5"><path d="M0 0h6.400L3.200 3.500z" fill="#222"></path></svg>
<div class="a" style="left:662px;top:113px;width:40.5px;height:21.5px;border:1px solid #ababab;background:#fff;"></div>
<div class="a" style="left:665.5px;top:117.3px;width:15.5px;height:13px;background:#000;"></div>
<div class="a" style="left:685.5px;top:115.3px;width:14.5px;height:17.2px;border:1px solid #a8a8a8;background:linear-gradient(#f4f4f4,#e6e6e6);"></div>
<svg class="a" style="left:688.5px;top:121px;" width="9" height="6" viewBox="0 0 9 6"><path d="M0.700 0.700L4.500 4.700l3.800-4" fill="none" stroke="#3c3c3c" stroke-width="1.500"></path></svg>
<div class="a" style="left:662px;top:136px;width:40.5px;height:21.5px;border:1px solid #ababab;background:#fff;"></div>
<div class="a" style="left:665.5px;top:140.3px;width:15.5px;height:13px;background:#000;"></div>
<div class="a" style="left:685.5px;top:138.3px;width:14.5px;height:17.2px;border:1px solid #a8a8a8;background:linear-gradient(#f4f4f4,#e6e6e6);"></div>
<svg class="a" style="left:688.5px;top:144px;" width="9" height="6" viewBox="0 0 9 6"><path d="M0.700 0.700L4.500 4.700l3.800-4" fill="none" stroke="#3c3c3c" stroke-width="1.500"></path></svg>
<svg class="a" style="left:709px;top:92.5px;" width="17" height="17" viewBox="0 0 17 17"><defs><radialGradient id="rs" cx=".4" cy=".35" r=".7"><stop offset="0" stop-color="#ff7a5a"></stop><stop offset="1" stop-color="#c81818"></stop></radialGradient></defs>
<circle cx="10" cy="6.500" r="6.300" fill="url(#rs)"></circle><rect x="1" y="4.500" width="11" height="11" fill="none" stroke="#1838b8" stroke-width="1.800"></rect><rect x="2.500" y="6" width="8" height="8" fill="#e8e8f0" opacity=".45"></rect></svg>
<svg class="a" style="left:730.8px;top:99.7px;" width="6.4" height="3.5" viewBox="0 0 6.4 3.5"><path d="M0 0h6.400L3.200 3.500z" fill="#222"></path></svg>
<svg class="a" style="left:751px;top:94.5px;" width="30" height="28" viewBox="0 0 30 28"><path d="M6.300 23.500A12.400 12.400 0 1 1 24.300 23" fill="none" stroke="#bfe4b9" stroke-width="3.200"></path><path d="M1 18.500l9.800 1.700-1 6.800H3.200z" fill="#bfe4b9"></path><path d="M22 22.500l3.800-1.500 1.500 3.500-3.300 2.500z" fill="#bfe4b9"></path></svg>
<span class="t" style="left: 749.5px; top: 126px; font-size: 11.6px; font-weight: 400; color: rgb(185, 185, 185); line-height: 20px; letter-spacing: -0.13px;">Rotate</span>
<svg class="a" style="left:762.8px;top:149.0px;" width="6.4" height="3.5" viewBox="0 0 6.4 3.5"><path d="M0 0h6.400L3.200 3.500z" fill="#c4c4c4"></path></svg>
<svg class="a" style="left:801px;top:93px;" width="32" height="31" viewBox="0 0 32 31"><rect x="1" y="0" width="2.600" height="30.500" rx="1" fill="#d8d8d8" stroke="#bdbdbd" stroke-width=".6"></rect>
<rect x="5.500" y="2.700" width="17" height="10.300" fill="#c6e9c0" stroke="#a8d8a8" stroke-width="1"></rect><rect x="17.500" y="16.300" width="13.500" height="11" fill="#c6e9c0" stroke="#a8d8a8" stroke-width="1"></rect>
<path d="M5.500 22l5.500-4v2.500h5v3h-5V26z" fill="#fbd9a0"></path></svg>
<span class="t" style="left: 790.5px; top: 126px; font-size: 11.6px; font-weight: 400; color: rgb(185, 185, 185); line-height: 20px; letter-spacing: 0.3px;">Alignment</span>
<svg class="a" style="left:814.8px;top:149.0px;" width="6.4" height="3.5" viewBox="0 0 6.4 3.5"><path d="M0 0h6.400L3.200 3.500z" fill="#c4c4c4"></path></svg>
<svg class="a" style="left:859px;top:93px;" width="26" height="31" viewBox="0 0 26 31"><rect x="0.500" y="0.500" width="20" height="17" rx="1.500" fill="#f2f5f8" stroke="#dfe5ea" stroke-width="1"></rect><rect x="1" y="1" width="19" height="3.500" fill="#e3eaf1"></rect>
<rect x="4.500" y="10.500" width="20.500" height="19.500" rx="1.500" fill="#f5f7fa" stroke="#dfe5ea" stroke-width="1"></rect><rect x="5" y="11" width="19.500" height="3.500" fill="#e3eaf1"></rect></svg>
<span class="t" style="left: 852.5px; top: 126px; font-size: 11.6px; font-weight: 400; color: rgb(185, 185, 185); line-height: 20px; letter-spacing: 0.04px;">Arrange</span>
<svg class="a" style="left:869.8px;top:149.0px;" width="6.4" height="3.5" viewBox="0 0 6.4 3.5"><path d="M0 0h6.400L3.200 3.500z" fill="#c4c4c4"></path></svg>
<svg class="a" style="left:905px;top:94px;opacity:1" width="33" height="30" viewBox="0 0 33 30"><defs><linearGradient id="pfa" x1="0" x2="1"><stop offset="0" stop-color="#4e4e4e"></stop><stop offset=".45" stop-color="#8e8e8e"></stop><stop offset="1" stop-color="#3c3c3c"></stop></linearGradient>
<linearGradient id="psa" x1="0" x2="1"><stop offset="0" stop-color="#9aa0a0"></stop><stop offset=".35" stop-color="#5c6060"></stop><stop offset="1" stop-color="#2e3030"></stop></linearGradient></defs>
<path d="M18.200 1.300Q18.300 0.800 19 0.800L27 1.200Q27.700 1.300 27.600 2L27.100 10.700L17.800 8.700Z" fill="url(#pfa)" stroke="#2a2a2a" stroke-width=".6"></path>
<path d="M5.300 18.500V12Q5.300 10 7.500 9.800L17 8.800L30 13.200Q32 14 32 16V24.500Q32 26.700 30 27L24.800 27.600L21.500 23.500L10.500 19.500H7Z" fill="#4b4d4e"></path>
<path d="M7 10L17 8.800L30 13.200L27.500 15.200L14 11.600L8.300 12.600Z" fill="#2c2d2e"></path>
<path d="M5.300 18.500V12Q5.300 10 7.500 9.800" fill="none" stroke="#c9cccc" stroke-width="1"></path>
<path d="M7.700 13.200L21.300 18.300V23.300L10.500 19.500H7.700Z" fill="#5e6061"></path><path d="M7.700 13.200L21.300 18.300V19.800L7.700 14.600Z" fill="#3a3b3c"></path>
<path d="M14.200 8.800L23 11L22.800 13L14 10.600Z" fill="#fafafa" stroke="#b5b5b5" stroke-width=".4"></path>
<path d="M24.500 14.800L32 15.800V24.500Q32 26.700 30 27L24.500 27.600Z" fill="url(#psa)"></path>
<path d="M21.300 18.200L24.600 16.800V25.300L21.500 25.800Z" fill="#f4f5f6" stroke="#b8bcc0" stroke-width=".4"></path><circle cx="22.600" cy="20.500" r=".85" fill="#2030ff"></circle>
<path d="M0.800 23.300L10.500 19.400L21.200 23L10.600 28.800Z" fill="#4a4c4e"></path><path d="M3.300 23.100L11 20.100L19.200 22.800L11.500 26.700Z" fill="#c6e6ee"></path><path d="M11 20.100L19.200 22.800L17.300 23.800L9 21Z" fill="#e6f4f8"></path>
<path d="M15.500 26.200L21.200 23L24.800 27.600L21 28.200Z" fill="#4a4c4e"></path></svg>
<span class="t" style="left: 910.5px; top: 126px; font-size: 11.6px; font-weight: 400; color: rgb(30, 30, 30); line-height: 20px; letter-spacing: 0.16px;">Print</span>
<svg class="a" style="left:949px;top:94.5px;" width="9" height="13" viewBox="0 0 9 13"><path d="M1 0.500l7 .8v11L1 11.500z" fill="#cfe0f5" stroke="#a9c4e8" stroke-width=".8"></path></svg>
<span class="t" style="left: 964.5px; top: 91.7px; font-size: 11.6px; font-weight: 400; color: rgb(30, 30, 30); line-height: 20px; letter-spacing: -0.11px;">Show Page Area</span>
<svg class="a" style="left:945px;top:117px;" width="17" height="15" viewBox="0 0 17 15"><rect x="3.300" y="2.500" width="7.500" height="5" fill="#fdfdfd" stroke="#3a4a9a" stroke-width=".8"></rect><rect x="0.500" y="6.800" width="13" height="5.200" rx="1" fill="#d9def0" stroke="#2e3e90" stroke-width=".9"></rect><rect x="1.500" y="8" width="11" height="1.800" fill="#2a3a86"></rect><rect x="3" y="10.300" width="8" height="3.700" fill="#fdfdfd" stroke="#3a4a9a" stroke-width=".8"></rect><rect x="3.800" y="12" width="6.400" height="1.500" fill="#2a3a86"></rect>
<circle cx="11.700" cy="4.700" r="4.300" fill="#86c61c" stroke="#4f8a0c" stroke-width=".6"></circle><circle cx="10.600" cy="3.300" r="1.600" fill="#b4e45c" opacity=".8"></circle></svg>
<span class="t" style="left:955px;top:116.7px;font-size:7.5px;font-weight:700;color:#111;line-height:10px;">?</span>
<span class="t" style="left: 964.5px; top: 114.8px; font-size: 11.6px; font-weight: 400; color: rgb(30, 30, 30); line-height: 20px; letter-spacing: 0.19px;">Printer Options</span>
<svg class="a" style="left:1050.8px;top:123.2px;" width="6.4" height="3.5" viewBox="0 0 6.4 3.5"><path d="M0 0h6.400L3.200 3.500z" fill="#333"></path></svg>
<span class="t" style="left: 945.5px; top: 138px; font-size: 11.6px; font-weight: 400; color: rgb(30, 30, 30); line-height: 20px; letter-spacing: 0.09px;">Clear Print Options</span>
<svg class="a" style="left:1064.5px;top:94px;opacity:0.3" width="33" height="30" viewBox="0 0 33 30"><defs><linearGradient id="pfb" x1="0" x2="1"><stop offset="0" stop-color="#4e4e4e"></stop><stop offset=".45" stop-color="#8e8e8e"></stop><stop offset="1" stop-color="#3c3c3c"></stop></linearGradient>
<linearGradient id="psb" x1="0" x2="1"><stop offset="0" stop-color="#9aa0a0"></stop><stop offset=".35" stop-color="#5c6060"></stop><stop offset="1" stop-color="#2e3030"></stop></linearGradient></defs>
<path d="M18.200 1.300Q18.300 0.800 19 0.800L27 1.200Q27.700 1.300 27.600 2L27.100 10.700L17.800 8.700Z" fill="url(#pfb)" stroke="#2a2a2a" stroke-width=".6"></path>
<path d="M5.300 18.500V12Q5.300 10 7.500 9.800L17 8.800L30 13.200Q32 14 32 16V24.500Q32 26.700 30 27L24.800 27.600L21.500 23.500L10.500 19.500H7Z" fill="#4b4d4e"></path>
<path d="M7 10L17 8.800L30 13.200L27.500 15.200L14 11.600L8.300 12.600Z" fill="#2c2d2e"></path>
<path d="M5.300 18.500V12Q5.300 10 7.500 9.800" fill="none" stroke="#c9cccc" stroke-width="1"></path>
<path d="M7.700 13.200L21.300 18.300V23.300L10.500 19.500H7.700Z" fill="#5e6061"></path><path d="M7.700 13.200L21.300 18.300V19.800L7.700 14.600Z" fill="#3a3b3c"></path>
<path d="M14.200 8.800L23 11L22.800 13L14 10.600Z" fill="#fafafa" stroke="#b5b5b5" stroke-width=".4"></path>
<path d="M24.500 14.800L32 15.800V24.500Q32 26.700 30 27L24.500 27.600Z" fill="url(#psb)"></path>
<path d="M21.300 18.200L24.600 16.800V25.300L21.500 25.800Z" fill="#f4f5f6" stroke="#b8bcc0" stroke-width=".4"></path><circle cx="22.600" cy="20.500" r=".85" fill="#2030ff"></circle>
<path d="M0.800 23.300L10.500 19.400L21.200 23L10.600 28.800Z" fill="#4a4c4e"></path><path d="M3.300 23.100L11 20.100L19.200 22.800L11.500 26.700Z" fill="#c6e6ee"></path><path d="M11 20.100L19.200 22.800L17.300 23.800L9 21Z" fill="#e6f4f8"></path>
<path d="M15.500 26.200L21.200 23L24.800 27.600L21 28.200Z" fill="#4a4c4e"></path></svg>
<span class="t" style="left: 1069px; top: 126px; font-size: 11.6px; font-weight: 400; color: rgb(185, 185, 185); line-height: 20px; letter-spacing: 0.16px;">Print</span>
<span class="t" style="left: 1065px; top: 140px; font-size: 11.6px; font-weight: 400; color: rgb(185, 185, 185); line-height: 20px; letter-spacing: -0.32px; transform: scaleX(0.982); transform-origin: 0px 50%;">Labels</span>
<svg class="a" style="left:1112.5px;top:94.5px;" width="30" height="28" viewBox="0 0 30 28"><path d="M1 7l12-6v20.500L1 26.500z" fill="#8e1f25"></path><path d="M1 7l12-6v6L1 14z" fill="#b0383c"></path>
<path d="M13 1l13 5v19l-13-3.500z" fill="#f4f4f4" stroke="#9a9a9a" stroke-width=".6"></path><path d="M15 5.500l9 3M15 8.500l9 3M15 11.500l9 3M15 14.500l9 3M15 17.500l9 3" stroke="#8a8a8a" stroke-width="1"></path>
<rect x="25.500" y="6.500" width="2.500" height="3.500" fill="#d62020"></rect><rect x="25.500" y="11" width="2.800" height="3.500" fill="#28c028"></rect><rect x="25.500" y="15.500" width="2.500" height="3.500" fill="#f08a1e"></rect><rect x="26" y="20" width="3" height="3.500" fill="#1828d8"></rect></svg>
<span class="t" style="left: 1110px; top: 126px; font-size: 11.6px; font-weight: 400; color: rgb(30, 30, 30); line-height: 20px; letter-spacing: -0.09px;">Link To</span>
<span class="t" style="left: 1115px; top: 139.5px; font-size: 11.6px; font-weight: 400; color: rgb(30, 30, 30); line-height: 20px; letter-spacing: -0.32px; transform: scaleX(0.989); transform-origin: 0px 50%;">BOM</span>
<svg class="a" style="left:1155px;top:94px;" width="29" height="29" viewBox="0 0 29 29"><path d="M2.500 2l13 2v21.500l-13-1.500z" fill="#f0f5fa" stroke="#d7e2ee" stroke-width="1"></path><path d="M24.500 0.500l2.500 2L8 21l-3 1 .8-3z" fill="#efefef" stroke="#d8d8d8" stroke-width=".8"></path><path d="M1 27h15" stroke="#e6e6e6" stroke-width="1.500"></path></svg>
<span class="t" style="left: 1159.5px; top: 126px; font-size: 11.6px; font-weight: 400; color: rgb(185, 185, 185); line-height: 20px; letter-spacing: -0.16px;">Edit</span>
<svg class="a" style="left:1206px;top:93.5px;" width="33" height="32" viewBox="0 0 33 32"><path d="M4 13.500C4 0.500,15 0.500,16.500 13.500S29.500 26.500,29.500 12.500" fill="none" stroke="#777" stroke-width="1.300"></path><path d="M5 27.500L28.500 3" stroke="#444" stroke-width="1.300"></path>
<g fill="#ececec" stroke="#7a7a7a" stroke-width=".9"><rect x="1.500" y="11.500" width="4.500" height="4.500"></rect><rect x="27.500" y="10.500" width="4.500" height="4.500"></rect><rect x="26.500" y="0.500" width="4.500" height="4.500"></rect><rect x="2.500" y="25.500" width="4.500" height="4.500"></rect></g>
<rect x="13.700" y="10.700" width="5.600" height="5.600" fill="#5a5a5a" stroke="#333" stroke-width=".8"></rect></svg>
<span class="t" style="left: 1208px; top: 126px; font-size: 11.6px; font-weight: 400; color: rgb(30, 30, 30); line-height: 20px; letter-spacing: -0.17px;">Show</span>
<span class="t" style="left: 1192.5px; top: 139.5px; font-size: 11.6px; font-weight: 400; color: rgb(30, 30, 30); line-height: 20px; letter-spacing: 0.02px;">Connectors</span>
<div class="a" style="left:348px;top:173.7px;width:914px;height:4.3px;background:#fff;"></div>
<div class="a" style="left:346px;top:179px;width:917px;height:710px;background:#3a3a3a;"></div>
<div class="a" style="left:351px;top:185px;width:902px;height:698px;border:1px solid #2c2c2c;"></div>
<div class="a" style="left:351px;top:211px;width:902px;height:1px;background:#2c2c2c;"></div>
<div class="a" style="left:363px;top:187px;width:827px;height:22px;border:1px solid #2c2c2c;"></div>
<span class="t" style="left: 368px; top: 188.7px; font-size: 11.6px; font-weight: 400; color: rgb(33, 33, 33); line-height: 20px; letter-spacing: 0.08px;">AAA - Basic Assembly WI Template</span>
<div class="a" style="left:1195.5px;top:189px;width:17.5px;height:17.5px;border:1px solid #2a2a2a;background:#343434;"></div>
<svg class="a" style="left:1197px;top:190.5px;" width="15" height="15" viewBox="0 0 15 15"><rect x="4" y="1" width="10" height="9" rx="1" fill="#343434" stroke="#0e0e0e" stroke-width="1.500"></rect><rect x="4" y="1" width="10" height="2.300" fill="#0e0e0e"></rect><rect x="1" y="4.500" width="10.500" height="9.500" rx="1" fill="#343434" stroke="#0e0e0e" stroke-width="1.500"></rect><rect x="1" y="4.500" width="10.500" height="2.500" fill="#0e0e0e"></rect><rect x="2.800" y="8.300" width="3" height="1" fill="#0e0e0e"></rect><rect x="2.800" y="10" width="3" height="1" fill="#0e0e0e"></rect><rect x="2.800" y="11.700" width="3" height="1" fill="#0e0e0e"></rect><rect x="6.800" y="8.300" width="3" height="4.400" fill="#0e0e0e"></rect></svg>
<div class="a" style="left:1218px;top:189px;width:18px;height:17.5px;border:1px solid #27466b;background:#3b4148;"></div>
<svg class="a" style="left:1221px;top:192px;" width="12" height="12" viewBox="0 0 12 12"><path d="M1.500 3l6.500-.5v8.500l-6.500.5z" fill="#32373d" stroke="#23282e" stroke-width="1.200"></path><path d="M11 0.500L4.500 8" stroke="#23282e" stroke-width="1.700"></path></svg>
<div class="a" style="left:356px;top:223px;width:22px;height:22px;background:#1f2a36;"></div>
<svg class="a" style="left:358px;top:227px;" width="9" height="12" viewBox="0 0 9 12"><path d="M0 0l7 4-1 7-4-1z" fill="#0f1e4a"></path></svg>
<svg class="a" style="left:357px;top:252px;" width="10" height="12" viewBox="0 0 10 12"><path d="M2 10C2 3,8 1,9 3L7 10z" fill="#4a2e26"></path></svg>
<div class="a" style="left:360px;top:270px;width:7px;height:1px;background:#474747;"></div>
<svg class="a" style="left:359.5px;top:278px;" width="8" height="12" viewBox="0 0 8 12"><path d="M1 1h6M1 5.700h6M1 10.500h6M1 1v9.500" stroke="#1f5a1a" stroke-width="1.500" stroke-dasharray="1.500 1" fill="none"></path></svg>
<div class="a" style="left:358px;top:299.7px;width:9px;height:1.4px;background:#225a1c;"></div>
<div class="a" style="left:379px;top:222px;width:824px;height:80px;background:#060606;"></div>
<div class="a" style="left:380.5px;top:223.5px;width:821px;height:80px;background:#333;"></div>
<div class="a" style="left:1129.5px;top:223.5px;width:16px;height:6px;background:#3a3a3a;"></div>
<div class="a" style="left:1147px;top:223.5px;width:7px;height:6px;background:#383838;"></div>
<div class="a" style="left:1155px;top:223.5px;width:16px;height:6px;background:#3a3a3a;"></div>
<svg class="a" style="left:1133px;top:226.5px;" width="38" height="3" viewBox="0 0 38 3"><path d="M0.500 3l4-3 4 3zM25.500 3l4-3 4 3z" fill="#1f3a1c"></path></svg>
<div class="a" style="left:1179px;top:226px;width:14px;height:4px;border:1.600px solid #0a0a0a;border-bottom:none;background:#3a3a3a;"></div>
<div class="a" style="left:1183px;top:227.5px;width:6px;height:1.5px;background:#0a0a0a;"></div>
<div class="a" style="left:1231px;top:224px;width:21px;height:61px;background:#323232;"></div>
<svg class="a" style="left:1235px;top:228px;" width="12" height="16" viewBox="0 0 12 16"><path d="M0.500 4l5-3.500 6 2.500v8l-5.500 4.500L0.500 12z" fill="#124e66"></path><path d="M0.500 4l5-3.500 6 2.500-5 3.500z" fill="#0f5c6c"></path><path d="M7.500 9.500l4-3.500v5l-5 4.500-3-1.500z" fill="#5e1c16"></path></svg>
<span class="t" style="left:1234.500px;top:246.500px;font-size:11.500px;line-height:12px;color:#1a1a1a;writing-mode:vertical-rl;letter-spacing:-.1px">Layers</span>
<div class="a" style="left:379px;top:856px;width:849px;height:25px;background:#06090b;"></div>
<svg class="a" style="left:989px;top:860px;" width="13" height="16" viewBox="0 0 13 16"><path d="M6 8V5.500a2.700 2.700 0 0 1 5.400 0v1.300" fill="none" stroke="#3b3b3b" stroke-width="1.100"></path><rect x="0.500" y="8" width="8" height="6.500" fill="#4a3412"></rect><path d="M1.500 9.500l4.500 4.500M4 9l4 4M1 12l2.500 2.500" stroke="#8a6a1c" stroke-width=".9"></path></svg>
<div class="a" style="left:1011px;top:860px;width:16.5px;height:16.5px;border:1px dashed #454545;"></div>
<svg class="a" style="left:1010px;top:860.5px;" width="20" height="16" viewBox="0 0 20 16"><path d="M7.7 8.300 L3 13.300" stroke="#45361f" stroke-width="2.300" stroke-linecap="round"></path><circle cx="10" cy="6" r="3.700" fill="#27333d" stroke="#34424e" stroke-width="1"></circle><circle cx="9" cy="5" r="1.300" fill="#3d4c59"></circle></svg>
<svg class="a" style="left:1036px;top:861.5px;" width="20" height="16" viewBox="0 0 20 16"><path d="M7.7 8.300 L3 13.300" stroke="#45361f" stroke-width="2.300" stroke-linecap="round"></path><circle cx="10" cy="6" r="3.700" fill="#27333d" stroke="#34424e" stroke-width="1"></circle><circle cx="9" cy="5" r="1.300" fill="#3d4c59"></circle></svg>
<span class="t" style="left: 1035px; top: 858.5px; font-size: 8px; font-weight: 700; color: rgb(74, 74, 74); line-height: 10px; letter-spacing: 0.32px;">100</span>
<svg class="a" style="left:1059px;top:861.5px;" width="20" height="16" viewBox="0 0 20 16"><path d="M7.7 8.300 L3 13.300" stroke="#45361f" stroke-width="2.300" stroke-linecap="round"></path><circle cx="10" cy="6" r="3.700" fill="#27333d" stroke="#34424e" stroke-width="1"></circle><circle cx="9" cy="5" r="1.300" fill="#3d4c59"></circle></svg>
<span class="t" style="left: 1058px; top: 858.5px; font-size: 8px; font-weight: 700; color: rgb(74, 74, 74); line-height: 10px; letter-spacing: -0.22px; transform: scaleX(0.892); transform-origin: 0px 50%;">ALL</span>
<div class="a" style="left:1083px;top:861.5px;width:5.5px;height:2px;background:#424242;"></div>
<div class="a" style="left:1090.5px;top:861.5px;width:5.5px;height:2px;background:#424242;"></div>
<svg class="a" style="left:1075.5px;top:861.5px;" width="20" height="16" viewBox="0 0 20 16"><path d="M12.3 8.300 L17 13.300" stroke="#45361f" stroke-width="2.300" stroke-linecap="round"></path><circle cx="10" cy="6" r="3.700" fill="#27333d" stroke="#34424e" stroke-width="1"></circle><circle cx="9" cy="5" r="1.300" fill="#3d4c59"></circle></svg>
<div class="a" style="left:1113.5px;top:861.5px;width:5.5px;height:2px;background:#424242;"></div>
<svg class="a" style="left:1098.5px;top:861.5px;" width="20" height="16" viewBox="0 0 20 16"><path d="M12.3 8.300 L17 13.300" stroke="#45361f" stroke-width="2.300" stroke-linecap="round"></path><circle cx="10" cy="6" r="3.700" fill="#27333d" stroke="#34424e" stroke-width="1"></circle><circle cx="9" cy="5" r="1.300" fill="#3d4c59"></circle></svg>
<div class="a" style="left:1126.5px;top:858px;width:49.5px;height:20px;background:#2e2e2e;"></div>
<span class="t" style="left: 1131.5px; top: 858.5px; font-size: 13px; font-weight: 400; color: rgb(22, 22, 22); line-height: 20px; letter-spacing: -0.36px; transform: scaleX(0.869); transform-origin: 0px 50%;">51%</span>
<div class="a" style="left:1160.5px;top:858.8px;width:15px;height:18.4px;border:1px solid #1c1c1c;background:#2e2e2e;"></div>
<svg class="a" style="left:1164px;top:862px;" width="8" height="12" viewBox="0 0 8 12"><path d="M0.700 4.700L4 1.200l3.300 3.500M0.700 7.300L4 10.800l3.300-3.500" fill="none" stroke="#141414" stroke-width="1.200"></path></svg>
<svg class="a" style="left:1178.5px;top:862px;" width="20" height="16" viewBox="0 0 20 16"><path d="M12.3 8.300 L17 13.300" stroke="#45361f" stroke-width="2.300" stroke-linecap="round"></path><circle cx="10" cy="6" r="3.700" fill="#27333d" stroke="#34424e" stroke-width="1"></circle><circle cx="9" cy="5" r="1.300" fill="#3d4c59"></circle></svg>
<svg class="a" style="left:1193.5px;top:859px;" width="6.5" height="6.5" viewBox="0 0 6.5 6.5"><path d="M3.250 0v6.500M0 3.250h6.500" stroke="#3d3d3d" stroke-width="1.700"></path></svg>
<svg class="a" style="left:1201.5px;top:862px;" width="20" height="16" viewBox="0 0 20 16"><path d="M12.3 8.300 L17 13.300" stroke="#45361f" stroke-width="2.300" stroke-linecap="round"></path><circle cx="10" cy="6" r="3.700" fill="#27333d" stroke="#34424e" stroke-width="1"></circle><circle cx="9" cy="5" r="1.300" fill="#3d4c59"></circle></svg>
<svg class="a" style="left:1209.5px;top:859px;" width="6.5" height="6.5" viewBox="0 0 6.5 6.5"><path d="M3.250 0v6.500M0 3.250h6.500" stroke="#3d3d3d" stroke-width="1.700"></path></svg>
<svg class="a" style="left:1216.5px;top:859px;" width="6.5" height="6.5" viewBox="0 0 6.5 6.5"><path d="M3.250 0v6.500M0 3.250h6.500" stroke="#3d3d3d" stroke-width="1.700"></path></svg>
<div class="a" style="left:1193px;top:839px;width:20px;height:2px;background:#2a2a2a;"></div>
<div class="a" style="left:366px;top:229px;width:847px;height:610px;background:#c1ced7;"></div>
<div class="a" style="left:345px;top:303px;width:22px;height:536px;background:#c1ced7;border-left:1px solid #a2a6a8;"></div>
<span class="t" style="left: 388px; top: 249px; font-size: 17.5px; font-weight: 400; color: rgb(68, 68, 68); line-height: 20px; letter-spacing: -0.49px; transform: scaleX(0.987); transform-origin: 0px 50%;">Settings</span>
<div class="a" style="left:1168px;top:251px;width:18px;height:18px;border:1px solid #9a9a9a;background:#eaeaea;"></div>
<svg class="a" style="left:1170.5px;top:253.5px;" width="13" height="13" viewBox="0 0 13 13"><circle cx="6.300" cy="6.300" r="6" fill="#ececec" stroke="#6a6a6a" stroke-width=".9"></circle><circle cx="6.300" cy="6.300" r="4.500" fill="#e8203c" stroke="#8a8a8a" stroke-width=".5"></circle><path d="M3.600 3.600l5.400 5.400M9 3.600l-5.400 5.400" stroke="#fff" stroke-width="2"></path></svg>
<div class="a" style="left:378px;top:298px;width:823px;height:497px;background:#fff;border:1px solid #a4a8ab;"></div>
<div class="a" style="left:381px;top:276px;width:91px;height:22px;background:linear-gradient(#f6f6f6,#eaeaea);border:1px solid #b0b0b0;border-bottom:none;"></div>
<div class="a" style="left:471px;top:276px;width:97px;height:22px;background:linear-gradient(#f6f6f6,#eaeaea);border:1px solid #b0b0b0;border-bottom:none;"></div>
<div class="a" style="left:567px;top:276px;width:93px;height:22px;background:linear-gradient(#f6f6f6,#eaeaea);border:1px solid #b0b0b0;border-bottom:none;"></div>
<div class="a" style="left:658px;top:274px;width:110px;height:25.5px;background:#fff;border:1px solid #b0b0b0;border-bottom:none;"></div>
<span class="t" style="left: 395px; top: 277.7px; font-size: 12px; font-weight: 700; color: rgb(34, 34, 34); line-height: 20px; letter-spacing: -0.05px;">Instruction</span>
<span class="t" style="left: 480px; top: 277.7px; font-size: 12px; font-weight: 400; color: rgb(30, 30, 30); line-height: 20px; letter-spacing: -0.04px;">Activity Details</span>
<span class="t" style="left: 576px; top: 277.7px; font-size: 12px; font-weight: 400; color: rgb(30, 30, 30); line-height: 20px; letter-spacing: -0.04px;">Option Codes</span>
<span class="t" style="left: 667px; top: 278px; font-size: 12px; font-weight: 400; color: rgb(30, 30, 30); line-height: 20px; letter-spacing: -0.16px;">Part Assignments</span>
<span class="t" style="left: 389px; top: 312px; font-size: 12px; font-weight: 400; color: rgb(30, 30, 30); line-height: 20px; letter-spacing: -0.07px;">Color Assignments by:</span>
<div class="a" style="left:510px;top:310px;width:151px;height:22px;border:1px solid #ababab;background:#fff;"></div>
<span class="t" style="left: 515px; top: 312px; font-size: 12px; font-weight: 400; color: rgb(30, 30, 30); line-height: 20px; letter-spacing: -0.11px;">Line Item</span>
<div class="a" style="left:644px;top:312px;width:15px;height:18px;border:1px solid #a8a8a8;background:linear-gradient(#f4f4f4,#e4e4e4);"></div>
<svg class="a" style="left:647px;top:318px;" width="9" height="6" viewBox="0 0 9 6"><path d="M0.700 0.700L4.500 4.700l3.800-4" fill="none" stroke="#3c3c3c" stroke-width="1.500"></path></svg>
<div class="a" style="left:670px;top:310px;width:1px;height:26px;background:#a8a8a8;"></div>
<span class="t" style="left: 680px; top: 309.7px; font-size: 12px; font-weight: 400; color: rgb(30, 30, 30); line-height: 20px; letter-spacing: -0.34px; transform: scaleX(0.992); transform-origin: 0px 50%;">Sort By:</span>
<div class="a" style="left:724px;top:310.5px;width:320px;height:17px;border:1px solid #ababab;background:#fff;"></div>
<span class="t" style="left: 729px; top: 309.7px; font-size: 12px; font-weight: 400; color: rgb(30, 30, 30); line-height: 20px; letter-spacing: -0.07px;">Manual</span>
<div class="a" style="left:1027px;top:311.5px;width:16px;height:15px;border:1px solid #a8a8a8;background:linear-gradient(#f4f4f4,#e4e4e4);"></div>
<svg class="a" style="left:1030.5px;top:316.5px;" width="9" height="6" viewBox="0 0 9 6"><path d="M0.700 0.700L4.500 4.700l3.800-4" fill="none" stroke="#3c3c3c" stroke-width="1.500"></path></svg>
<svg class="a" style="left:1058px;top:314px;" width="15" height="15" viewBox="0 0 15 15"><circle cx="7.200" cy="7.200" r="6.300" fill="#fff" stroke="#5a5a5a" stroke-width="1"></circle><circle cx="7.200" cy="7.200" r="3.600" fill="#222"></circle></svg>
<span class="t" style="left: 1077px; top: 311.7px; font-size: 12px; font-weight: 400; color: rgb(30, 30, 30); line-height: 20px; letter-spacing: -0.34px; transform: scaleX(0.875); transform-origin: 0px 50%;">ASC</span>
<svg class="a" style="left:1102px;top:314px;" width="15" height="15" viewBox="0 0 15 15"><circle cx="7.200" cy="7.200" r="6.300" fill="#fff" stroke="#5a5a5a" stroke-width="1"></circle></svg>
<span class="t" style="left: 1121.5px; top: 311.7px; font-size: 12px; font-weight: 400; color: rgb(30, 30, 30); line-height: 20px; letter-spacing: -0.34px; transform: scaleX(0.851); transform-origin: 0px 50%;">DSC</span>
<div class="a" style="left:1152px;top:310px;width:22px;height:19px;border:1px solid #e6e8f0;background:#fdfdfd;"></div>
<span class="t" style="left:1158.5px;top:306.0px;font-size:11px;font-weight:400;color:#aab2d6;line-height:20px;letter-spacing:.3px">...</span>
<span class="t" style="left: 394.5px; top: 343.5px; font-size: 13px; font-weight: 400; color: rgb(60, 60, 60); line-height: 20px; letter-spacing: 0.09px;">Custom Color Sorting</span>
<div class="a" style="left:1068px;top:341px;width:30px;height:22px;border:1px solid #a0a0a0;background:#f2f2f2;"></div>
<div class="a" style="left:1070px;top:343px;width:26px;height:18px;border:1px solid #b4b4b4;background:linear-gradient(#f0f0f0,#e2e2e2);"></div>
<svg class="a" style="left:1075.5px;top:344.5px;opacity:1" width="15.0" height="15.0" viewBox="-7.5 -7.5 15.0 15.0"><circle r="6.1" fill="#e4e4e4" stroke="#555" stroke-width="0.9"></circle><circle r="4.6" fill="#2f9f3f" stroke="#555" stroke-opacity=".55" stroke-width=".5"></circle><path d="M0 3V-1M-2.600 .2L0-2.600l2.600 2.800z" stroke="#fff" stroke-width="1.500" fill="#fff" stroke-linejoin="round"></path></svg>
<div class="a" style="left:1102px;top:341px;width:30px;height:22px;border:1px solid #a0a0a0;background:#f2f2f2;"></div>
<div class="a" style="left:1104px;top:343px;width:26px;height:18px;border:1px solid #b4b4b4;background:linear-gradient(#f0f0f0,#e2e2e2);"></div>
<svg class="a" style="left:1109.5px;top:344.5px;opacity:1" width="15.0" height="15.0" viewBox="-7.5 -7.5 15.0 15.0"><circle r="6.1" fill="#e4e4e4" stroke="#555" stroke-width="0.9"></circle><circle r="4.6" fill="#2f9f3f" stroke="#555" stroke-opacity=".55" stroke-width=".5"></circle><path d="M0-3V1M-2.600-.2L0 2.600l2.600-2.800z" stroke="#fff" stroke-width="1.500" fill="#fff" stroke-linejoin="round"></path></svg>
<div class="a" style="left:1141px;top:341px;width:1px;height:22px;background:#a8a8a8;"></div>
<div class="a" style="left:1153px;top:342px;width:22px;height:18px;border:1px solid #1e6fd6;background:#ececec;"></div>
<svg class="a" style="left:1156.5px;top:343.5px;opacity:1" width="15.0" height="15.0" viewBox="-7.5 -7.5 15.0 15.0"><circle r="6.1" fill="#e4e4e4" stroke="#555" stroke-width="0.9"></circle><circle r="4.6" fill="#2f9f3f" stroke="#555" stroke-opacity=".55" stroke-width=".5"></circle><path d="M-3.500 0h7M0-3.500v7" stroke="#fff" stroke-width="2.200"></path></svg>
<div class="a" style="left:394px;top:367px;width:791px;height:412px;border:1px solid #c9c9c9;background:#fff;"></div>
<div class="a" style="left:395px;top:390px;width:789px;height:21px;background:#dddddd;"></div>
<div class="a" style="left:395px;top:390px;width:44px;height:21px;background:#f0f0f0;"></div>
<div class="a" style="left:395px;top:390px;width:789px;height:1px;background:#d6d6d6;"></div>
<div class="a" style="left:395px;top:411px;width:789px;height:1px;background:#d6d6d6;"></div>
<div class="a" style="left:395px;top:432px;width:789px;height:1px;background:#d6d6d6;"></div>
<div class="a" style="left:395px;top:453px;width:789px;height:1px;background:#d6d6d6;"></div>
<div class="a" style="left:395px;top:474px;width:789px;height:1px;background:#d6d6d6;"></div>
<div class="a" style="left:395px;top:495px;width:789px;height:1px;background:#d6d6d6;"></div>
<div class="a" style="left:439px;top:368px;width:1px;height:127px;background:#d6d6d6;"></div>
<div class="a" style="left:539px;top:368px;width:1px;height:127px;background:#d6d6d6;"></div>
<div class="a" style="left:687.5px;top:368px;width:1px;height:127px;background:#d6d6d6;"></div>
<div class="a" style="left:835.5px;top:368px;width:1px;height:127px;background:#d6d6d6;"></div>
<div class="a" style="left:983.5px;top:368px;width:1px;height:127px;background:#d6d6d6;"></div>
<span class="t" style="left: 399.5px; top: 369.5px; font-size: 12px; font-weight: 400; color: rgb(30, 30, 30); line-height: 20px; letter-spacing: -0.17px;">Color</span>
<span class="t" style="left: 444.5px; top: 369.5px; font-size: 12px; font-weight: 400; color: rgb(30, 30, 30); line-height: 20px; letter-spacing: -0.11px;">Line Item</span>
<span class="t" style="left: 544.5px; top: 369.5px; font-size: 12px; font-weight: 400; color: rgb(30, 30, 30); line-height: 20px; letter-spacing: -0.1px;">Part Number</span>
<span class="t" style="left: 692.5px; top: 369.5px; font-size: 12px; font-weight: 400; color: rgb(30, 30, 30); line-height: 20px; letter-spacing: -0.34px; transform: scaleX(0.978); transform-origin: 0px 50%;">References</span>
<span class="t" style="left: 840.5px; top: 369.5px; font-size: 12px; font-weight: 400; color: rgb(30, 30, 30); line-height: 20px; letter-spacing: -0.05px;">Description</span>
<span class="t" style="left: 988.5px; top: 369.5px; font-size: 12px; font-weight: 400; color: rgb(30, 30, 30); line-height: 20px; letter-spacing: 0.14px;">Footprint</span>
<div class="a" style="left:410px;top:394px;width:14.5px;height:14.5px;background:#00a651;border:1px solid #1a1a1a;"></div>
<span class="t" style="left:444.5px;top:392.0px;font-size:12px;font-weight:400;color:#333;line-height:20px;">2</span>
<span class="t" style="left: 544.5px; top: 392px; font-size: 12px; font-weight: 400; color: rgb(51, 51, 51); line-height: 20px; letter-spacing: -0.04px;">A-680 - 1</span>
<span class="t" style="left: 840.5px; top: 392px; font-size: 12px; font-weight: 400; color: rgb(51, 51, 51); line-height: 20px; letter-spacing: 0.47px;">Mfg Mnl</span>
<div class="a" style="left:410px;top:415px;width:14.5px;height:14.5px;background:#00aeef;border:1px solid #1a1a1a;"></div>
<span class="t" style="left:444.5px;top:413.0px;font-size:12px;font-weight:400;color:#333;line-height:20px;">4</span>
<span class="t" style="left: 544.5px; top: 413px; font-size: 12px; font-weight: 400; color: rgb(51, 51, 51); line-height: 20px; letter-spacing: -0.04px;">B-101 - 1</span>
<span class="t" style="left: 840.5px; top: 413px; font-size: 12px; font-weight: 400; color: rgb(51, 51, 51); line-height: 20px; letter-spacing: -0.34px; transform: scaleX(0.984); transform-origin: 0px 50%;">Carry Bag</span>
<div class="a" style="left:410px;top:436px;width:14.5px;height:14.5px;background:#ec008c;border:1px solid #1a1a1a;"></div>
<span class="t" style="left:444.5px;top:434.0px;font-size:12px;font-weight:400;color:#333;line-height:20px;">6</span>
<span class="t" style="left: 544.5px; top: 434px; font-size: 12px; font-weight: 400; color: rgb(51, 51, 51); line-height: 20px; letter-spacing: -0.04px;">B-102 - 1</span>
<span class="t" style="left: 840.5px; top: 434px; font-size: 12px; font-weight: 400; color: rgb(51, 51, 51); line-height: 20px; letter-spacing: -0.15px;">Shipper</span>
<div class="a" style="left:410px;top:457px;width:14.5px;height:14.5px;background:#f7977a;border:1px solid #1a1a1a;"></div>
<span class="t" style="left:444.5px;top:455.0px;font-size:12px;font-weight:400;color:#333;line-height:20px;">7</span>
<span class="t" style="left: 544.5px; top: 455px; font-size: 12px; font-weight: 400; color: rgb(51, 51, 51); line-height: 20px; letter-spacing: -0.04px;">B-103 - 1</span>
<span class="t" style="left: 840.5px; top: 455px; font-size: 12px; font-weight: 400; color: rgb(51, 51, 51); line-height: 20px; letter-spacing: -0.34px; transform: scaleX(0.989); transform-origin: 0px 50%;">Decal</span>
<div class="a" style="left:410px;top:478px;width:14.5px;height:14.5px;background:#3cb878;border:1px solid #1a1a1a;"></div>
<span class="t" style="left:444.5px;top:476.0px;font-size:12px;font-weight:400;color:#333;line-height:20px;">10</span>
<span class="t" style="left: 544.5px; top: 476px; font-size: 12px; font-weight: 400; color: rgb(51, 51, 51); line-height: 20px; letter-spacing: -0.04px;">B-409 - 1</span>
<span class="t" style="left: 840.5px; top: 476px; font-size: 12px; font-weight: 400; color: rgb(51, 51, 51); line-height: 20px; letter-spacing: -0.09px;">Oracle carton labe</span>
<div class="a" style="left:1123px;top:807px;width:75px;height:22px;border:1px solid #9a9a9a;background:linear-gradient(#f5f5f5,#e4e4e4);"></div>
<span class="t" style="left: 1152px; top: 808.5px; font-size: 12px; font-weight: 400; color: rgb(30, 30, 30); line-height: 20px; letter-spacing: -0.34px; transform: scaleX(0.97); transform-origin: 0px 50%;">OK</span>

</body></html>
